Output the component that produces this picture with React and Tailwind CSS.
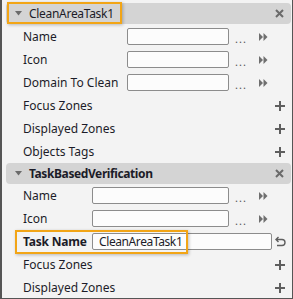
import React from "react";

const font = { fontFamily: '"Noto Sans", "Open Sans", sans-serif' };

function Caret() {
  return (
    <svg width="7" height="5" viewBox="0 0 7 5" className="shrink-0">
      <path d="M0 0 H7 L3.5 4.5 Z" fill="#6b6b6b" />
    </svg>
  );
}

function Close() {
  return (
    <svg width="9" height="9" viewBox="0 0 9 9">
      <path d="M1 1 L8 8 M8 1 L1 8" stroke="#6a6a6a" strokeWidth="2" />
    </svg>
  );
}

function Plus() {
  return (
    <svg width="10" height="10" viewBox="0 0 10 10">
      <path d="M5 0 V10 M0 5 H10" stroke="#5e5e5e" strokeWidth="2" />
    </svg>
  );
}

function Forward() {
  return (
    <svg width="9" height="8" viewBox="0 0 9 8">
      <path d="M0 0 L4 4 L0 8 Z M4.5 0 L8.5 4 L4.5 8 Z" fill="#6e6e6e" />
    </svg>
  );
}

function Undo() {
  return (
    <svg width="11" height="11" viewBox="0 0 11 11">
      <path
        d="M3.5 1 L1 3.5 L3.5 6 M1 3.5 H7 A3 3 0 0 1 7 9.5 H2"
        stroke="#5e5e5e"
        strokeWidth="1.4"
        fill="none"
      />
    </svg>
  );
}

function Header({ title, bold }) {
  return (
    <div className="ml-1 mr-px flex h-[21px] items-center rounded-[4px] bg-[#d4d4d4] pl-[9px] pr-[7px]">
      <Caret />
      <span
        className={
          bold
            ? "ml-[7px] text-[12px] font-bold tracking-[-0.4px] text-[#1c1c28]"
            : "ml-[7px] text-[12px] tracking-[-0.3px] text-[#1c1c28]"
        }
      >
        {title}
      </span>
      <div className="ml-auto flex">
        <Close />
      </div>
    </div>
  );
}

function FieldRow({ label, labelW, inputW }) {
  return (
    <div className="flex h-[23px] items-center pl-[21px]">
      <span className={`${labelW} shrink-0 text-[12px] text-[#1c1c28]`}>{label}</span>
      <div
        className={`h-[17px] ${inputW} shrink-0 rounded-[2px] border border-[#8c8c8c] bg-[#fcfcfc]`}
      />
      <span className="ml-[6px] mt-[4px] text-[11px] leading-none tracking-[1px] text-[#555]">
        ...
      </span>
      <div className="ml-[12px] flex">
        <Forward />
      </div>
    </div>
  );
}

function AddRow({ label }) {
  return (
    <div className="flex h-[23px] items-center pl-[21px] pr-[7px]">
      <span className="text-[12px] text-[#1c1c28]">{label}</span>
      <div className="ml-auto flex">
        <Plus />
      </div>
    </div>
  );
}

export default function App() {
  return (
    <div
      className="relative h-[299px] w-[293px] overflow-hidden border-b border-l-2 border-r border-[#555] bg-[#f3f3f3] pt-[3px]"
      style={font}
    >
      <Header title="CleanAreaTask1" />
      <div className="mt-px">
        <FieldRow label="Name" labelW="w-[104px]" inputW="w-[102px]" />
        <FieldRow label="Icon" labelW="w-[104px]" inputW="w-[102px]" />
        <FieldRow label="Domain To Clean" labelW="w-[104px]" inputW="w-[102px]" />
        <AddRow label="Focus Zones" />
        <AddRow label="Displayed Zones" />
        <AddRow label="Objects Tags" />
      </div>
      <Header title="TaskBasedVerification" bold />
      <FieldRow label="Name" labelW="w-[69px]" inputW="w-[137px]" />
      <FieldRow label="Icon" labelW="w-[69px]" inputW="w-[137px]" />
      <div className="flex h-[23px] items-center pl-[21px] pr-[6px]">
        <span className="w-[69px] shrink-0 text-[12px] font-bold tracking-[-0.2px] text-[#1c1c28]">
          Task Name
        </span>
        <div className="flex h-[17px] w-[180px] shrink-0 items-center rounded-[2px] border border-[#8c8c8c] bg-[#fcfcfc] pl-[6px] text-[12px] tracking-[-0.4px] text-[#1c1c28]">
          CleanAreaTask1
        </div>
        <div className="ml-auto flex">
          <Undo />
        </div>
      </div>
      <AddRow label="Focus Zones" />
      <AddRow label="Displayed Zones" />

      <div className="pointer-events-none absolute left-[5px] top-[2px] h-[22px] w-[115px] border-2 border-[#f2a516] shadow-[1px_1px_3px_rgba(0,0,0,0.25)]" />
      <div className="pointer-events-none absolute left-[13px] top-[230px] h-[24px] w-[173px] border-2 border-[#f2a516] shadow-[1px_1px_3px_rgba(0,0,0,0.25)]" />
    </div>
  );
}
